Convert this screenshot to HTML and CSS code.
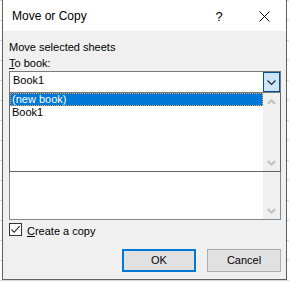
FILE: index.html
```html
<!DOCTYPE html>
<html>
<head>
<meta charset="utf-8">
<link rel="stylesheet" href="styles.css">
</head>
<body>
<div class="dialog">
  <div class="titlebar">
    <span class="title">Move or Copy</span>
    <span class="tb-btn help">?</span>
    <span class="tb-btn close">
      <svg width="11" height="11" viewBox="0 0 11 11"><path d="M0.5 0.5 L10.5 10.5 M10.5 0.5 L0.5 10.5" stroke="#000" stroke-width="1" fill="none"/></svg>
    </span>
  </div>
  <div class="content">
    <div class="label">Move selected sheets</div>
    <div class="label second"><u>T</u>o book:</div>
    <div class="combo-wrap">
      <div class="combo">
        <span class="combo-text">Book1</span>
        <span class="combo-btn">
          <svg width="9" height="5" viewBox="0 0 9 5"><path d="M0.5 0.5 L4.5 4.5 L8.5 0.5" stroke="#222" stroke-width="1.1" fill="none"/></svg>
        </span>
      </div>
      <div class="dropdown">
        <ul class="dd-list">
          <li class="sel">(new book)</li>
          <li>Book1</li>
        </ul>
        <div class="scrollbar">
          <span class="sb-arrow"><svg width="9" height="6" viewBox="0 0 9 6"><path d="M0.8 5 L4.5 1.3 L8.2 5" stroke="#bfbfbf" stroke-width="1.8" fill="none"/></svg></span>
          <span class="sb-arrow"><svg width="9" height="6" viewBox="0 0 9 6"><path d="M0.8 1 L4.5 4.7 L8.2 1" stroke="#bfbfbf" stroke-width="1.8" fill="none"/></svg></span>
        </div>
      </div>
    </div>
    <div class="listbox">
      <div class="scrollbar">
        <span class="sb-arrow"><svg width="9" height="6" viewBox="0 0 9 6"><path d="M0.8 5 L4.5 1.3 L8.2 5" stroke="#bfbfbf" stroke-width="1.8" fill="none"/></svg></span>
        <span class="sb-arrow"><svg width="9" height="6" viewBox="0 0 9 6"><path d="M0.8 1 L4.5 4.7 L8.2 1" stroke="#bfbfbf" stroke-width="1.8" fill="none"/></svg></span>
      </div>
    </div>
    <div class="check">
      <span class="box"><svg width="11" height="11" viewBox="0 0 11 11"><path d="M1.5 5.5 L4.2 8.3 L9.6 2.2" stroke="#222" stroke-width="1.1" fill="none"/></svg></span>
      <span class="check-label"><u>C</u>reate a copy</span>
    </div>
    <div class="buttons">
      <button class="btn default">OK</button>
      <button class="btn">Cancel</button>
    </div>
  </div>
</div>
<svg class="cursor" width="13" height="20" viewBox="0 0 13 20"><path d="M0.5 0.5 V16.5 L4.5 12.5 L7.3 18.8 L9.6 17.8 L6.9 11.7 H12 Z" fill="#fff" stroke="#000" stroke-width="1" stroke-linejoin="miter"/></svg>
</body>
</html>
```
FILE: styles.css
```css
html, body {
  margin: 0;
  padding: 0;
}
body {
  width: 289px;
  height: 281px;
  overflow: hidden;
  position: relative;
  font-family: "Liberation Sans", Arial, sans-serif;
  font-size: 11px;
  color: #000;
  background: #fff repeating-linear-gradient(to bottom, #d6d6d6 0 1px, transparent 1px 20px);
}
.dialog {
  margin-left: 2px;
  width: 285px;
  height: 280px;
  box-sizing: border-box;
  border: 1px solid #5f5f5f;
  border-top: none;
  background: #f0f0f0;
  display: flex;
  flex-direction: column;
}
.titlebar {
  height: 31px;
  flex: none;
  background: #fff;
  display: flex;
}
.title {
  flex: 1;
  padding: 9px 0 0 9px;
  font-size: 12px;
  line-height: 14px;
}
.tb-btn {
  display: flex;
  align-items: center;
  justify-content: center;
}
.help {
  width: 46px;
  font-size: 13px;
  padding-top: 1px;
}
.close {
  width: 44px;
  padding-top: 1px;
}
.content {
  flex: 1;
  padding: 10px 5px 0 6px;
}
.label {
  line-height: 13px;
}
.label.second {
  margin-top: 3px;
}
.combo-wrap {
  position: relative;
  margin-top: 1px;
}
.combo {
  height: 22px;
  box-sizing: border-box;
  border: 1px solid #7a7a7a;
  background: #fff;
  display: flex;
}
.combo-text {
  flex: 1;
  padding: 2px 0 0 3px;
  line-height: 13px;
}
.combo-btn {
  width: 17px;
  box-sizing: border-box;
  border: 1px solid #0b4e93;
  background: #cce4f7;
  display: flex;
  align-items: center;
  justify-content: center;
}
.dropdown {
  position: absolute;
  left: 0;
  right: 0;
  top: 22px;
  height: 79px;
  box-sizing: border-box;
  border: 1px solid #646464;
  border-top: none;
  background: #fff;
  display: flex;
  z-index: 2;
}
.dd-list {
  flex: 1;
  list-style: none;
  margin: 0;
  padding: 0;
}
.dd-list li {
  height: 13px;
  line-height: 13px;
  padding-left: 2px;
}
.dd-list li.sel {
  background: #0078d7;
  color: #fff;
  outline: 1px dotted #f7a448;
  outline-offset: -1px;
}
.scrollbar {
  width: 17px;
  background: #f0f0f0;
  display: flex;
  flex-direction: column;
  justify-content: space-between;
}
.sb-arrow {
  height: 17px;
  display: flex;
  align-items: center;
  justify-content: center;
}
.listbox {
  margin-top: 20px;
  height: 107px;
  box-sizing: border-box;
  border: 1px solid #828790;
  background: #fff;
  display: flex;
  justify-content: flex-end;
}
.check {
  display: flex;
  align-items: flex-start;
  margin-top: 3px;
}
.box {
  width: 13px;
  height: 13px;
  box-sizing: border-box;
  border: 1px solid #333;
  background: #fff;
  display: flex;
}
.check-label {
  margin-left: 5px;
  padding-top: 2px;
  line-height: 13px;
}
.buttons {
  display: flex;
  justify-content: flex-end;
  gap: 11px;
  margin-top: 11px;
}
.btn {
  width: 74px;
  height: 23px;
  box-sizing: border-box;
  border: 1px solid #adadad;
  background: #e1e1e1;
  font: inherit;
  color: #000;
  padding: 0;
  line-height: 13px;
  border-radius: 0;
}
.btn.default {
  border: 2px solid #0078d7;
}
.cursor {
  position: absolute;
  left: 222px;
  top: 98px;
}
```
